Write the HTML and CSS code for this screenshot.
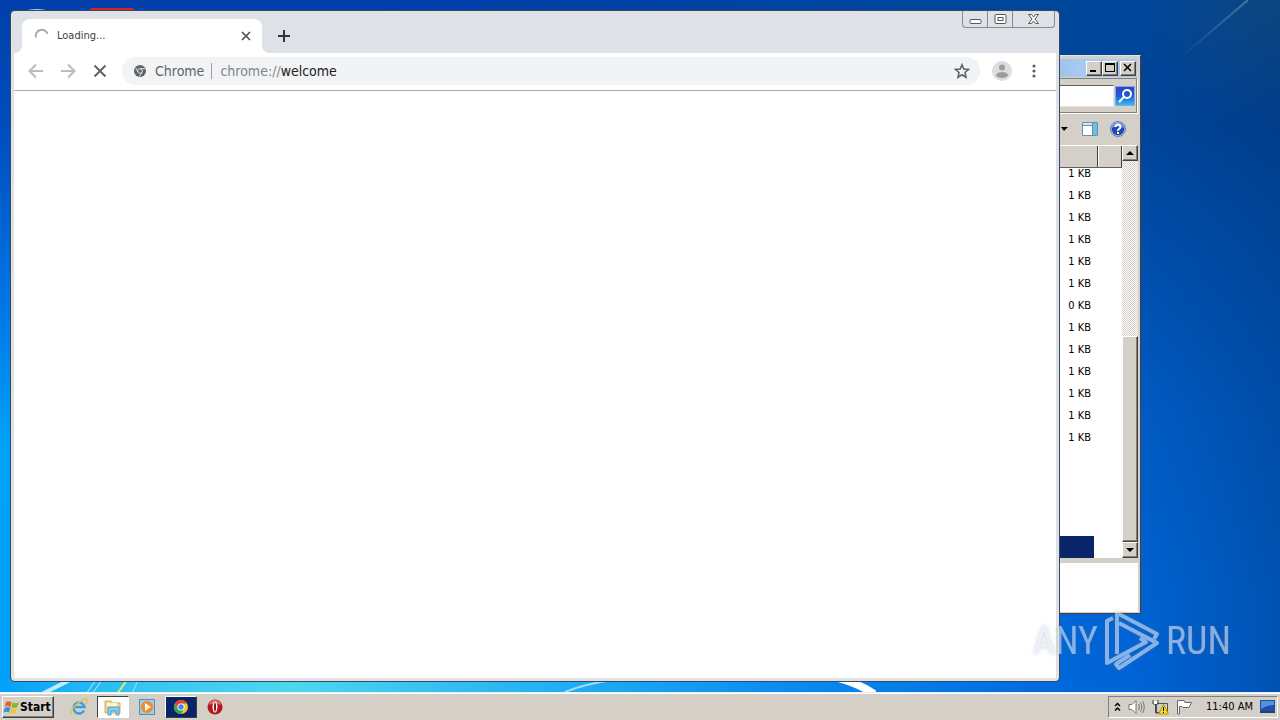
FILE: index.html
```html
<!DOCTYPE html>
<html lang="en">
<head>
<meta charset="utf-8">
<title>Desktop</title>
<link rel="stylesheet" href="styles.css">
</head>
<body>
<main class="desktop">
  <svg class="wallpaper" viewBox="0 0 1280 692" preserveAspectRatio="none" aria-hidden="true">
    <defs>
      <linearGradient id="glow" x1="0" x2="1"><stop offset="0" stop-color="#02a0fa"/><stop offset=".12" stop-color="#35c4f2"/><stop offset=".26" stop-color="#4fd6ee"/><stop offset=".5" stop-color="#22aef4"/><stop offset=".7" stop-color="#0a8cf0"/><stop offset="1" stop-color="#0270e0" stop-opacity="0"/></linearGradient>
      <linearGradient id="beam" x1="0" y1="1" x2="1" y2="0"><stop offset="0" stop-color="#fff" stop-opacity="0"/><stop offset="1" stop-color="#fff" stop-opacity=".25"/></linearGradient>
    </defs>
    <rect x="0" y="680" width="1120" height="12" fill="url(#glow)"/>
    <g fill="none" stroke="#fff">
      <path d="M42 694 70 680" stroke-width="4" opacity=".75"/>
      <path d="M86 694 96 680M92 694 102 680" opacity=".7"/>
      <path d="M117 694 127 680" stroke="#d7f36a" stroke-width="2"/>
      <path d="M132 694 138 680" opacity=".5"/>
      <path d="M565 692Q585 684 612 680" stroke-width="2" opacity=".6"/>
      <path d="M838 678Q860 684 874 694" stroke-width="8"/>
      <path d="M1180 58 1248 0" stroke="url(#beam)" stroke-width="2"/>
    </g>
    <path d="M24 11Q36 7 50 11Z" fill="#b8d4ee"/>
    <rect x="90" y="8" width="44" height="6" rx="1" fill="#d3281c"/>
  </svg>

  <section class="explorer" aria-label="File explorer">
    <header class="ex-title">
      <div class="ex-pair">
        <button class="ex-btn" aria-label="Minimize"><svg width="12" height="10"><path d="M2 7h6v2H2z"/></svg></button>
        <button class="ex-btn" aria-label="Maximize"><svg width="12" height="10"><path d="M1 0h10v9H1zM2 2v6h8V2z" fill-rule="evenodd"/></svg></button>
      </div>
      <button class="ex-btn" aria-label="Close"><svg width="12" height="10"><path d="M2 1l7 7M9 1 2 8" stroke="#000" stroke-width="1.500"/></svg></button>
    </header>
    <div class="ex-search">
      <input class="ex-input" type="text" aria-label="Search">
      <button class="ex-go" aria-label="Search"><svg width="20" height="20" fill="none" stroke="#fff"><circle cx="12" cy="8" r="4" stroke-width="2"/><path d="M9 11l-5 5" stroke-width="2"/></svg></button>
    </div>
    <div class="ex-tools">
      <button class="plain" aria-label="View options"><svg width="7" height="4"><path d="M0 0h7L3 4z"/></svg></button>
      <button class="plain" aria-label="Preview pane"><svg width="16" height="14"><path d="M.5.5h15v13H.5z" fill="#fff" stroke="#5d91b5"/><path d="M1 1h9v2H1z" fill="#d4eaf6"/><path d="M11 1h4v12h-4z" fill="#6fc0de"/><path d="M10.500 1v12M1 3.500h9" stroke="#5d91b5"/></svg></button>
      <button class="plain" aria-label="Help"><svg width="16" height="16"><circle cx="8" cy="8" r="7.500" fill="#d9e2f6" stroke="#6179b8"/><circle cx="8" cy="8" r="6.500" fill="#2448b0"/><path d="M2 7a6 5 0 0 1 12 0Q8 4 2 7" fill="#6b8de0"/><path d="M5.500 6Q5.500 3.500 8 3.500T10.500 6Q10.500 7 9 8T8 10M8 11v2" fill="none" stroke="#fff" stroke-width="2"/></svg></button>
    </div>
    <div class="ex-body">
      <div class="ex-list">
        <div class="ex-head"><span class="ex-size"></span><span class="ex-end"></span></div>
        <div class="ex-rows">
          <table>
            <tbody>
              <tr><td>1 KB</td></tr><tr><td>1 KB</td></tr><tr><td>1 KB</td></tr><tr><td>1 KB</td></tr><tr><td>1 KB</td></tr><tr><td>1 KB</td></tr><tr><td>0 KB</td></tr><tr><td>1 KB</td></tr><tr><td>1 KB</td></tr><tr><td>1 KB</td></tr><tr><td>1 KB</td></tr><tr><td>1 KB</td></tr><tr><td>1 KB</td></tr>
              <tr><td></td></tr><tr><td></td></tr><tr><td></td></tr><tr><td></td></tr><tr class="selected"><td></td></tr>
            </tbody>
          </table>
        </div>
      </div>
      <div class="ex-scroll">
        <button class="ex-btn" aria-label="Scroll up"><svg width="8" height="4"><path d="M0 4h8L4 0z"/></svg></button>
        <div class="ex-track"><div class="ex-thumb"></div></div>
        <button class="ex-btn" aria-label="Scroll down"><svg width="8" height="4"><path d="M0 0h8L4 4z"/></svg></button>
      </div>
    </div>
    <div class="ex-details"></div>
  </section>

  <section class="chrome" aria-label="Browser">
    <header class="tabs">
      <div class="tab">
        <svg width="16" height="16" fill="none" stroke="#a8aaad" stroke-width="2"><path d="M2 9.500A6 6 0 0 1 13.500 6"/></svg>
        <span class="tab-name">Loading...</span>
        <button class="plain" aria-label="Close tab"><svg width="10" height="10" stroke="#4d5156" stroke-width="1.700"><path d="M1 1l8 8M9 1 1 9"/></svg></button>
      </div>
      <button class="plain new-tab" aria-label="New tab"><svg width="12" height="12"><path d="M6 0v12M0 6h12" stroke="#30343a" stroke-width="2"/></svg></button>
      <div class="win-controls">
        <button class="wc" aria-label="Minimize"><svg width="13" height="12"><rect x="1" y="6.500" width="11" height="4" rx="1" fill="#fff" stroke="#55585f"/></svg></button>
        <button class="wc" aria-label="Maximize"><svg width="13" height="12" fill="#fff" stroke="#55585f"><rect x="1" y="1.500" width="11" height="9" rx="1"/><rect x="4" y="4.500" width="5" height="3"/></svg></button>
        <button class="wc wide" aria-label="Close"><svg width="13" height="12"><path d="M1.500 1.500h3l2 2.500 2-2.500h3L8 6l3.500 4.500h-3l-2-2.500-2 2.500h-3L5 6z" fill="#fff" stroke="#55585f"/></svg></button>
      </div>
    </header>
    <nav class="toolbar">
      <button class="plain tool" aria-label="Back"><svg width="16" height="16" fill="none" stroke="#babcbe" stroke-width="2"><path d="M15 8H2M8 1.500 1.500 8 8 14.500"/></svg></button>
      <button class="plain tool" aria-label="Forward"><svg width="16" height="16" fill="none" stroke="#babcbe" stroke-width="2"><path d="M1 8h13M8 1.500 14.500 8 8 14.500"/></svg></button>
      <button class="plain tool" aria-label="Stop"><svg width="14" height="14" stroke="#5f6368" stroke-width="2"><path d="M1.500 1.500l11 11M12.500 1.500l-11 11"/></svg></button>
      <div class="omnibox">
        <svg width="12" height="12" viewBox="0 0 14 14"><circle cx="7" cy="7" r="7" fill="#5f6368"/><circle cx="7" cy="7" r="2.700" fill="none" stroke="#f1f3f4"/><path d="M7 4.300h6M4.700 8.300 2 3.500M9.300 8.300 6.300 13.500" stroke="#f1f3f4"/></svg>
        <span class="origin">Chrome</span>
        <span class="url">chrome://<b>welcome</b></span>
        <button class="plain" aria-label="Bookmark"><svg width="16" height="16" fill="none" stroke="#5f6368" stroke-width="1.600"><path d="M8 1.800l1.800 4.300 4.700.4-3.500 3 1 4.700L8 11.700l-4 2.500 1-4.700-3.500-3 4.700-.4z"/></svg></button>
      </div>
      <button class="plain profile" aria-label="Profile"><svg width="20" height="20"><circle cx="10" cy="10" r="10" fill="#dcddde"/><circle cx="10" cy="6.500" r="3" fill="#9b9c9e"/><ellipse cx="10" cy="14" rx="6" ry="3" fill="#9b9c9e"/></svg></button>
      <button class="plain more" aria-label="Menu"><svg width="4" height="14" fill="#5f6368"><circle cx="2" cy="2" r="1.600"/><circle cx="2" cy="7" r="1.600"/><circle cx="2" cy="12" r="1.600"/></svg></button>
    </nav>
    <div class="page"></div>
  </section>

  <div class="watermark">
    <span>ANY</span>
    <svg width="56" height="62" viewBox="0 0 56 62" fill="none" stroke="#dfe9f6" stroke-width="4" stroke-linejoin="round"><path d="M9 8 3 11V53L42 32 36 28"/><path d="M13 44V3L53 24 50 29"/><path d="M15 13 53 33 15 58 12 54 26 45"/></svg>
    <span>RUN</span>
  </div>
</main>

<footer class="taskbar">
  <button class="start"><svg width="17" height="16" viewBox="0 0 18 16"><path d="M3 3q3-2 6 0L8 8Q5 6 2 8z" fill="#e8622c"/><path d="M10 3q3 2 7 0l-2 5q-3 2-6 0z" fill="#7dba38"/><path d="M2 9q3-2 6 0l-2 5q-3-2-6 0z" fill="#3d8ee0"/><path d="M9 9q3 2 6 0l-2 5q-3 2-6 0z" fill="#f6c62c"/></svg>Start</button>
  <div class="apps">
    <button class="app" aria-label="Internet Explorer"><svg width="18" height="18" viewBox="0 0 18 18" fill="none"><path d="M14 12.500A5.500 5.500 0 1 1 14.500 9H5" stroke="#35a1e4" stroke-width="2.500"/><path d="M2 16Q-1 13 7 6T17 2q1 2-2 5" stroke="#ecc23c" stroke-width="1.500"/></svg></button>
    <button class="app open" aria-label="File explorer"><svg width="18" height="18" viewBox="0 0 18 18"><path d="M1 3h6l1 2h8v10H1z" fill="#f0d98c" stroke="#cfae58"/><path d="M3 5h10v4H3z" fill="#fff5c8"/><path d="M4 17V9h11v8h-3v-4H7v4z" fill="#8accee" stroke="#4f9dd2"/></svg></button>
    <button class="app" aria-label="Media player"><svg width="16" height="16"><path d="M.5.5h15v15H.5z" fill="#9ccdf0" stroke="#4f8ec6"/><circle cx="8" cy="8" r="6" fill="#f48a1c"/><path d="M6 4v8l6-4z" fill="#fff"/></svg></button>
    <button class="app active" aria-label="Chrome"><svg width="16" height="16" viewBox="0 0 16 16"><circle cx="8" cy="8" r="7" fill="#f5c52c"/><path d="M1.900 4.500A7 7 0 0 1 14.100 4.500H8L5 9.800z" fill="#e34234"/><path d="M1.900 4.500A7 7 0 0 0 8 15L11 9.800H5z" fill="#35a355"/><circle cx="8" cy="8" r="3.600" fill="#fff"/><circle cx="8" cy="8" r="2.700" fill="#4285f4"/></svg></button>
    <button class="app" aria-label="Opera"><svg width="16" height="16"><circle cx="8" cy="8" r="7.500" fill="#b5161c"/><path d="M2 6a6 5 0 0 1 12 0q-6-3-12 0" fill="#e06a68"/><ellipse cx="8" cy="8" rx="2.500" ry="5.500" fill="#fff"/><ellipse cx="8" cy="8" rx="1" ry="4.500" fill="#8e1014"/></svg></button>
  </div>
  <div class="tray">
    <button class="plain" aria-label="Show hidden icons"><svg width="7" height="10" fill="none" stroke="#000" stroke-width="1.500"><path d="M1 4l2.500-2.500L6 4M1 8.500 3.500 6 6 8.500"/></svg></button>
    <button class="plain" aria-label="Volume"><svg width="17" height="16" fill="none" stroke="#777"><path d="M1 5.500h3l4-4v13l-4-4H1z" fill="#fff"/><path d="M10.500 5q2 3 0 6M12.500 3.500q3 4.500 0 9M14.500 2q3.500 6 0 12"/></svg></button>
    <button class="plain" aria-label="Network"><svg width="17" height="16"><path d="M4.500 4.500h11v9h-11z" fill="#ccc" stroke="#555"/><path d="M1 1v4h5V1M3.500 5v9h5" fill="none" stroke="#444"/><path d="M2 2h3v3H2z" fill="#fff"/><path d="M11.500 5.500 16.500 15h-10z" fill="#ffdb20" stroke="#b89300"/><path d="M11.500 8v4M11.500 13v1" stroke="#000"/></svg></button>
    <button class="plain" aria-label="Action center"><svg width="17" height="16" fill="#fff" stroke="#666"><path d="M1.500 15V1.500H8l1 2h6.500L13 8.500H7l-1-1H3.500V15z"/></svg></button>
    <time class="clock">11:40 AM</time>
    <button class="plain" aria-label="Show desktop"><svg width="15" height="13"><path d="M0 0h15v11H0z" fill="#1c4fae"/><path d="M1 1h13v4Q7 5 1 9z" fill="#5590dd"/><path d="M0 11h15v2H0z" fill="#243f70"/></svg></button>
  </div>
</footer>
</body>
</html>
```
FILE: styles.css
```css
* { box-sizing: border-box; }
body {
  margin: 0;
  min-height: 100vh;
  display: flex;
  flex-direction: column;
  overflow: hidden;
  font-family: "DejaVu Sans Condensed", "Noto Sans", sans-serif;
  font-size: 11px;
  color: #000;
}
button { font: inherit; color: inherit; margin: 0; padding: 0; border: 0; }
svg { display: block; flex: none; }
.plain { background: none; display: flex; align-items: center; justify-content: center; }

.desktop {
  flex: 1;
  position: relative;
  overflow: hidden;
  background: linear-gradient(#003faa 0, #004fc0 20%, #0078e4 45%, #00a3f8 65%, #00a0fa 100%);
}
.desktop::before {
  content: "";
  position: absolute;
  inset: 0;
  background:
    linear-gradient(90deg, transparent 88%, rgba(0, 48, 110, .35) 100%),
    radial-gradient(circle at 100% 0, rgba(30, 84, 124, .6), transparent 130px),
    linear-gradient(#00479a 0, #00449a 18%, #004fae 36%, #005cc6 60%, #0064d4 85%, #0064d8 100%);
  mask-image: linear-gradient(90deg, transparent 30%, #000 85%);
}
.wallpaper { position: absolute; inset: 0; width: 100%; height: 100%; }

.explorer {
  position: absolute;
  inset: 55px 139px 78px 50%;
  display: flex;
  flex-direction: column;
  padding: 3px 1px 1px;
  background: #d4d0c8;
  border: 1px solid;
  border-color: #e8e5df #404040 #404040 #e8e5df;
}
.ex-title {
  display: flex;
  align-items: center;
  justify-content: flex-end;
  gap: 2px;
  height: 18px;
  margin: 0 2px;
  padding: 0 1px;
  background: linear-gradient(90deg, #0a246a, #a6caf0 88%);
}
.ex-pair { display: flex; }
.ex-btn {
  display: flex;
  align-items: center;
  justify-content: center;
  width: 16px;
  height: 15px;
  background: #d4d0c8;
  border: 1px solid;
  border-color: #fff #404040 #404040 #fff;
  box-shadow: inset -1px -1px #808080;
}
.ex-search {
  display: flex;
  align-items: center;
  gap: 1px;
  height: 35px;
  margin: 1px 2px 0;
  padding-right: 1px;
  border: 1px solid #808080;
  border-width: 1px 1px 1px 0;
  box-shadow: 1px 1px #fff;
}
.ex-input {
  flex: 1;
  min-width: 0;
  height: 22px;
  background: #fff;
  border: 1px solid;
  border-color: #606060 #e8e5df #e8e5df #606060;
}
.ex-go { width: 20px; height: 20px; border-radius: 2px; background: linear-gradient(#3040c8, #2458d8 50%, #35c8ee); box-shadow: inset 0 0 0 1px #7fa8e8; }
.ex-tools { display: flex; align-items: center; justify-content: flex-end; gap: 12px; height: 32px; padding-right: 13px; }
.ex-tools :first-child { margin-right: 2px; }
.ex-tools svg:first-child { margin: 0; }
.ex-body { flex: 1; display: flex; min-height: 0; margin-right: 1px; }
.ex-list { flex: 1; display: flex; flex-direction: column; min-width: 0; background: #fff; }
.ex-head { display: flex; height: 23px; background: #d4d0c8; border-top: 1px solid #fff; border-bottom: 1px solid #606060; }
.ex-size { flex: 1; border-right: 1px solid #404040; }
.ex-end { width: 24px; border-left: 1px solid #fff; border-right: 1px solid #404040; }
.ex-rows { flex: 1; min-height: 0; overflow: hidden; display: flex; flex-direction: column; justify-content: flex-end; padding-right: 28px; }
.ex-rows table { width: 100%; border-collapse: collapse; }
.ex-rows td { height: 22px; padding: 2px 3px 0; text-align: right; line-height: 10px; }
.selected { background: #0a246a; }
.ex-scroll { width: 16px; display: flex; flex-direction: column; }
.ex-scroll .ex-btn { height: 16px; }
.ex-track {
  flex: 1;
  display: flex;
  flex-direction: column;
  justify-content: flex-end;
  background: repeating-conic-gradient(#d4d0c8 0 25%, #fff 0 50%) 0 0 / 2px 2px;
}
.ex-thumb { height: 54%; background: #d4d0c8; border: 1px solid; border-color: #fff #404040 #404040 #fff; box-shadow: inset -1px -1px #808080; }
.ex-details { height: 54px; margin-right: 1px; background: #fff; border-top: 5px solid #d4d0c8; }

.chrome {
  position: absolute;
  inset: 11px 221px 11px 11px;
  display: flex;
  flex-direction: column;
  padding: 0 3px 3px;
  background: #dee1e6;
  border-radius: 4px;
  box-shadow: 0 0 0 1px #3a4a5c;
}
.tabs { display: flex; align-items: flex-start; height: 42px; padding: 0 1px 0 8px; }
.tab {
  position: relative;
  display: flex;
  align-items: center;
  gap: 7px;
  width: 240px;
  height: 34px;
  margin-top: 8px;
  padding: 0 11px 0 12px;
  background: #fff;
  border-radius: 8px 8px 0 0;
}
.tab::before, .tab::after { content: ""; position: absolute; bottom: 0; width: 8px; height: 8px; }
.tab::before { right: 100%; background: radial-gradient(circle at 0 0, transparent 8px, #fff 8px); }
.tab::after { left: 100%; background: radial-gradient(circle at 100% 0, transparent 8px, #fff 8px); }
.tab-name { flex: 1; color: #3c4043; line-height: 16px; }
.new-tab { width: 28px; height: 28px; margin: 11px 0 0 8px; }
.win-controls { display: flex; margin-left: auto; border: 1px solid #868a93; border-top: 0; border-radius: 0 0 4px 4px; }
.wc { display: flex; align-items: center; justify-content: center; width: 25px; height: 16px; background: none; border-right: 1px solid #868a93; }
.wc.wide { width: 41px; border-right: 0; }
.toolbar { display: flex; align-items: center; height: 38px; padding: 0 14px 1px 6px; background: #fff; border-bottom: 1px solid #a9abae; }
.tool { width: 32px; height: 32px; }
.omnibox {
  flex: 1;
  display: flex;
  align-items: center;
  height: 28px;
  margin-left: 6px;
  padding: 0 10px 0 12px;
  background: #f1f3f4;
  border-radius: 14px;
  font-size: 14px;
  line-height: 20px;
}
.origin { margin-left: 9px; padding-right: 7px; color: #5f6368; border-right: 1px solid #9aa0a6; line-height: 16px; }
.url { flex: 1; margin-left: 8px; color: #80868b; }
.url b { font-weight: inherit; color: #202124; }
.profile { margin-left: 12px; }
.more { width: 16px; margin-left: 14px; }
.page { flex: 1; background: #fff; }

.watermark {
  position: absolute;
  right: 49px;
  bottom: 20px;
  display: flex;
  align-items: center;
  gap: 6px;
  font: 38px/62px "Liberation Sans Narrow", "Roboto Condensed", "Liberation Sans", sans-serif;
  color: #dfe9f6;
  opacity: .6;
  filter: drop-shadow(0 0 2px rgba(90, 100, 120, .5));
}

.taskbar {
  display: flex;
  align-items: center;
  height: 28px;
  padding: 2px 2px 2px;
  background: #d4d0c8;
  border-top: 1px solid #e8f2f8;
  box-shadow: inset 0 1px #fff;
}
.start {
  display: flex;
  align-items: center;
  height: 22px;
  width: 52px;
  font: bold 12px/16px "DejaVu Sans Condensed", sans-serif;
  background: #d4d0c8;
  border: 1px solid;
  border-color: #fff #404040 #404040 #fff;
  box-shadow: inset -1px -1px #808080;
}
.apps { display: flex; gap: 2px; margin-left: 9px; }
.app { display: flex; align-items: center; justify-content: center; width: 32px; height: 22px; background: none; border: 1px solid transparent; }
.open { background: #fff; border-color: #404040 #fff #fff #404040; }
.active { background: #0a246a; border-color: #fff #404040 #404040 #fff; }
.tray {
  display: flex;
  align-items: center;
  gap: 7px;
  height: 22px;
  margin-left: auto;
  padding: 0 2px 0 5px;
  border: 1px solid;
  border-color: #808080 #fff #fff #808080;
}
.clock { margin: 0 0 0 6px; line-height: 16px; white-space: nowrap; }
```
